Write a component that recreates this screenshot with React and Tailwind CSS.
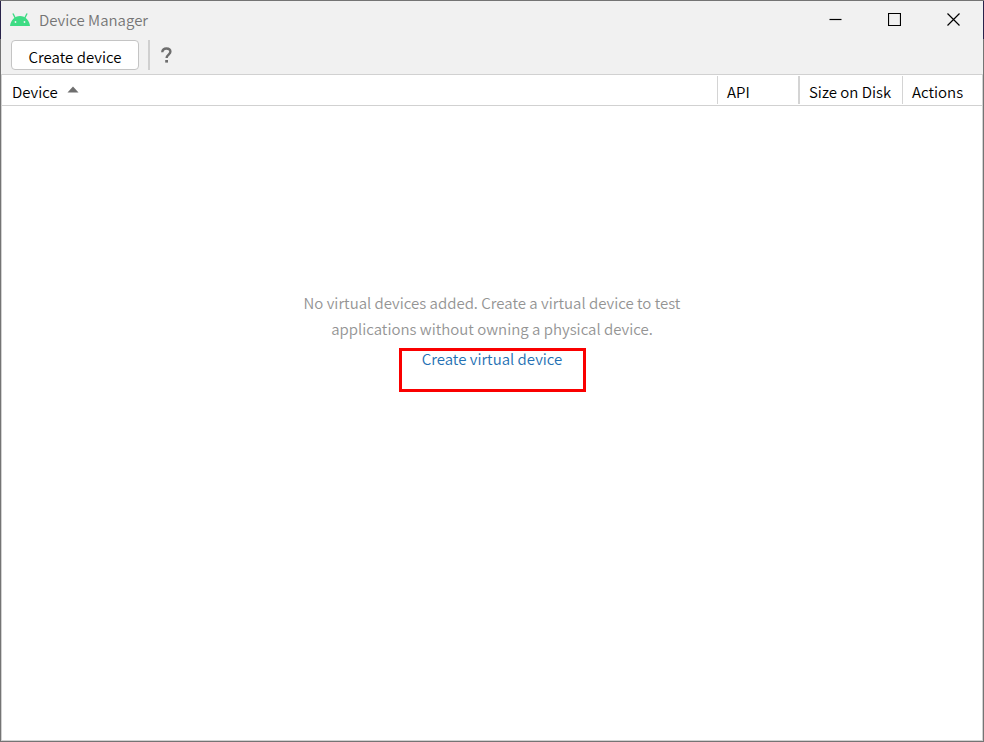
import React, { useState } from 'react';

function AndroidIcon() {
  return (
    <svg width="20" height="14" viewBox="0 0 20 14" className="shrink-0" aria-hidden="true">
      <path d="M0 13C.5 7.600 4.600 3 10 3s9.500 4.600 10 10z" fill="#3ddc84" />
      <path d="M5.200 5 3.200 1M14.800 5l2-4" stroke="#3ddc84" strokeWidth="1.400" strokeLinecap="round" />
      <circle cx="5.500" cy="9" r="0.900" fill="#f1f1f1" />
      <circle cx="14.500" cy="9" r="0.900" fill="#f1f1f1" />
    </svg>
  );
}

const WINDOW_BUTTONS = [
  { label: 'Minimize', path: 'M.5 6.500h12' },
  { label: 'Maximize', path: 'M.5.5h12v12H.5z' },
  { label: 'Close', path: 'm.5.5 12 12m0-12-12 12' },
];

export default function App() {
  const [ascending, setAscending] = useState(true);

  return (
    <div className="min-h-screen flex flex-col border-y border-[#747474] bg-white text-black text-[15px] font-[350] font-['Noto_Sans_CJK_KR',sans-serif]">
      {/* Title bar */}
      <header className="h-[38px] flex items-center border-x border-[#29234a] bg-[#f1f1f1]">
        <div className="flex-1 flex items-center gap-[9px] pl-[9px]">
          <AndroidIcon />
          <h1 className="text-[#757575] font-[350]">Device Manager</h1>
        </div>
        {WINDOW_BUTTONS.map(({ label, path }) => (
          <button key={label} type="button" aria-label={label} className="w-[59px] h-9 self-start flex items-center justify-center">
            <svg width="13" height="13" viewBox="0 0 13 13" fill="none" stroke="#000" strokeWidth="1.200">
              <path d={path} />
            </svg>
          </button>
        ))}
      </header>

      <div className="flex-1 flex flex-col border-x border-[#747474]">
        {/* Toolbar */}
        <div className="h-[35px] flex items-start gap-[9px] pl-2.5 pt-px bg-[#f1f1f1]">
          <button type="button" className="h-[30px] w-32 pt-1 rounded border border-[#c4c4c4] bg-white leading-6">
            Create device
          </button>
          <div className="flex items-center h-[30px] border-l-2 border-[#cfcfcf] pl-2.5">
            <button type="button" aria-label="Help">
              <svg width="13" height="16" viewBox="0 0 13 16" fill="none" stroke="#6e6e6e" strokeWidth="2.400">
                <path d="M2.300 5.200C2.300 2.800 4 1.500 6.400 1.500s4 1.300 4 3.300c0 2.600-3.800 3-3.800 6.200" />
                <path d="M6.600 13v2.600" strokeWidth="2.800" />
              </svg>
            </button>
          </div>
        </div>

        <main className="flex-1 flex flex-col border border-[#d1d1d1]">
          <table className="w-full table-fixed border-b border-[#d1d1d1]">
            <colgroup>
              <col />
              <col className="w-[81px]" />
              <col className="w-[104px]" />
              <col className="w-20" />
            </colgroup>
            <thead>
              <tr className="h-[30px] text-left">
                <th className="p-0 pl-2.5 font-[350]" aria-sort={ascending ? 'ascending' : 'descending'}>
                  <button type="button" className="flex items-center gap-[9px] pt-1 leading-6" onClick={() => setAscending(!ascending)}>
                    Device
                    <svg width="12" height="12" viewBox="0 0 12 12" className={ascending ? '' : 'rotate-180'} aria-hidden="true">
                      <path d="M6 .5 11.500 6.500H.5z" fill="#6e6e6e" />
                    </svg>
                  </button>
                </th>
                <th className="p-0 font-[350]">
                  <div className="h-7 pt-1 pl-[9px] border-l border-[#d4d4d4] leading-6">API</div>
                </th>
                <th className="p-0 font-[350]">
                  <div className="h-7 pt-1 pl-[9px] border-l-2 border-[#d4d4d4] leading-6 whitespace-nowrap">Size on Disk</div>
                </th>
                <th className="p-0 font-[350]">
                  <div className="h-7 pt-1 pl-[9px] border-l border-[#d4d4d4] leading-6">Actions</div>
                </th>
              </tr>
            </thead>
          </table>

          {/* Empty state */}
          <div className="flex flex-col items-center pt-[184px] text-center">
            <p className="text-[#949494] leading-[26px]">
              No virtual devices added. Create a virtual device to test
              <br />
              applications without owning a physical device.
            </p>
            <div className="mt-1.5 w-[187px] h-11 border-3 border-[#fa0000] leading-4">
              <a href="#create" className="text-[#2470b3]">Create virtual device</a>
            </div>
          </div>
        </main>
      </div>
    </div>
  );
}
